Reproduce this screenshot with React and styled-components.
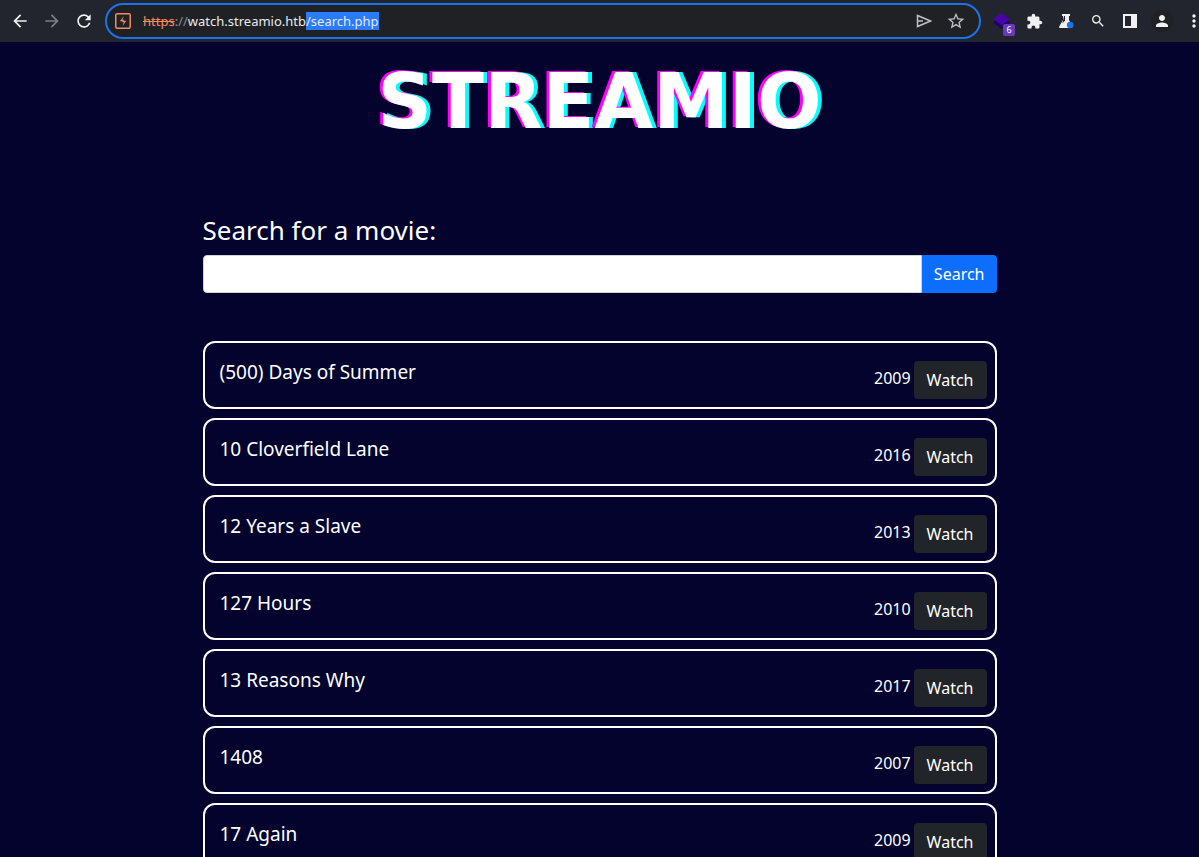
import React, { useState } from 'react';
import styled, { createGlobalStyle } from 'styled-components';
import {
  MdArrowBack,
  MdArrowForward,
  MdRefresh,
  MdStarBorder,
  MdExtension,
  MdSearch,
  MdPerson,
  MdMoreVert,
} from 'react-icons/md';

const GlobalStyle = createGlobalStyle`
  * {
    box-sizing: border-box;
  }

  body {
    margin: 0;
    background: #03032e;
    color: #fff;
    font-family: "Noto Sans", "Open Sans", sans-serif;
    font-size: 16px;
    line-height: 24px;
  }

  button, input {
    font: inherit;
  }
`;

const Screen = styled.div`
  height: 100vh;
  display: flex;
  flex-direction: column;
  overflow: hidden;
`;

const Toolbar = styled.header`
  display: flex;
  align-items: center;
  flex: none;
  height: 42px;
  padding-left: 4px;
  background: #22242e;
  overflow: hidden;
`;

const ToolButton = styled.button`
  display: flex;
  align-items: center;
  justify-content: center;
  flex: none;
  width: 32px;
  height: 32px;
  padding: 0;
  border: none;
  background: none;
  color: ${props => props.$color || '#f1f1f1'};
`;

const OverflowButton = styled(ToolButton)`
  margin-right: -11px;
`;

const Omnibox = styled.div`
  display: flex;
  align-items: center;
  flex: 1;
  min-width: 0;
  height: 36px;
  margin: 0 12px 0 5px;
  padding: 0 7px 0 8px;
  border: 2px solid #1a73e8;
  border-radius: 18px;
  background: #202124;
`;

const Url = styled.label`
  margin-left: 12px;
  color: #e8eaed;
  font-size: 13px;
  line-height: 18px;
  white-space: nowrap;
`;

const Scheme = styled.span`
  color: #f28b60;
  text-decoration: line-through;
`;

const Slashes = styled.span`
  color: #8b8e93;
`;

const Selected = styled.span`
  display: inline-block;
  background: #2b7bff;
`;

const UrlInput = styled.input`
  flex: 1;
  min-width: 0;
  border: none;
  outline: none;
  background: none;
  color: #e8eaed;
`;

const BadgeButton = styled(ToolButton)`
  position: relative;
  justify-content: flex-start;
  width: 25px;
`;

const Badge = styled.span`
  position: absolute;
  right: 3px;
  bottom: 1px;
  width: 12px;
  height: 12px;
  border-radius: 2px;
  background: #673ab7;
  color: #fff;
  font-size: 9px;
  line-height: 12px;
  text-align: center;
`;

const Avatar = styled.span`
  display: flex;
  align-items: center;
  justify-content: center;
  width: 22px;
  height: 22px;
  border-radius: 50%;
  background: #202124;
`;

const Page = styled.main`
  flex: 1;
  min-height: 0;
  overflow: hidden;
`;

const Logo = styled.h1`
  margin: 0;
  padding-top: 18px;
  color: #fff;
  font-family: "DejaVu Sans", sans-serif;
  font-size: 76px;
  font-weight: 700;
  line-height: 84px;
  text-align: center;
  text-shadow: -3px -1px 0 #f0f, 4px 0 0 #0ff;
`;

const Container = styled.div`
  width: 100%;
  max-width: 794px;
  margin: 0 auto;
`;

const SearchForm = styled.form`
  padding-top: 69px;
`;

const SearchLabel = styled.label`
  display: block;
  margin-bottom: 8px;
  font-size: 26px;
  line-height: 34px;
`;

const InputGroup = styled.div`
  display: flex;
  height: 38px;
`;

const SearchInput = styled.input`
  flex: 1;
  min-width: 0;
  padding: 6px 12px;
  border: 1px solid #ced4da;
  border-radius: 4px 0 0 4px;
  background: #fff;
  color: #212529;
  outline: none;
`;

const Button = styled.button`
  flex: none;
  height: 38px;
  padding: 0 ${props => (props.$primary ? '12px' : '13px')};
  border: none;
  border-radius: ${props => (props.$primary ? '0 4px 4px 0' : '4px')};
  background: ${props => (props.$primary ? '#0d6efd' : '#212529')};
  color: #fff;
  cursor: pointer;
`;

const MovieList = styled.ul`
  display: flex;
  flex-direction: column;
  gap: 9px;
  margin: 48px 0 0;
  padding: 0;
  list-style: none;
`;

const MovieCard = styled.li`
  display: flex;
  align-items: flex-start;
  padding: 18px 8px 8px 15px;
  border: 2px solid #fff;
  border-radius: 12px;
`;

const MovieTitle = styled.h2`
  flex: 1;
  margin: 0;
  font-size: 19px;
  font-weight: 400;
  line-height: 22px;
`;

const MovieYear = styled.span`
  margin: 5px 3px 0 0;
`;

const movies = [
  { title: '(500) Days of Summer', year: 2009 },
  { title: '10 Cloverfield Lane', year: 2016 },
  { title: '12 Years a Slave', year: 2013 },
  { title: '127 Hours', year: 2010 },
  { title: '13 Reasons Why', year: 2017 },
  { title: '1408', year: 2007 },
  { title: '17 Again', year: 2009 },
];

const BurpIcon = () => (
  <svg width="16" height="16" viewBox="0 0 16 16">
    <rect x="0.75" y="0.75" width="14.5" height="14.5" rx="1.5" fill="none" stroke="#f28b60" strokeWidth="1.5" />
    <path d="M8.8 3 4.8 8.2h2.6v1.4l1.4-1V6.9H7.4zM7.4 13l4-5.2H8.8V6.4l-1.4 1v1.7h1.4z" fill="#f28b60" />
  </svg>
);

const SendIcon = () => (
  <svg width="16" height="14" viewBox="0 0 16 14" fill="none" stroke="#bdc1c6" strokeWidth="1.5">
    <path d="M1.5 1.5 14.5 7l-13 5.5z" />
    <path d="M1.5 7H7" />
  </svg>
);

const LayersIcon = () => (
  <svg width="17" height="16" viewBox="0 0 17 16">
    <path d="M0 9.5 8.5 4l8.5 5.5L8.5 16z" fill="#20006b" />
    <path d="M0 6 8.5 0 17 6l-8.5 6z" fill="#4505a8" />
  </svg>
);

const FlaskIcon = () => (
  <svg width="16" height="16" viewBox="0 0 16 16">
    <path d="M4 1h8v2h-1v4l3.2 6.4q.6 1.6-1 1.6H2.2q-1.8 0-1-1.6L5 7V3H4z" fill="#f1f1f1" />
    <path d="M6 3h1v4.6l-2.6 3z" fill="#22242e" />
    <circle cx="12.2" cy="12" r="3.3" fill="#1a73e8" />
  </svg>
);

const PanelIcon = () => (
  <svg width="14" height="14" viewBox="0 0 14 14">
    <path d="M0 0h14v14H0zM2 2v10h6V2z" fill="#f1f1f1" fillRule="evenodd" />
  </svg>
);

const BrowserBar = () => (
  <Toolbar>
    <ToolButton aria-label="Back"><MdArrowBack size={20} /></ToolButton>
    <ToolButton aria-label="Forward" $color="#7d7e83"><MdArrowForward size={20} /></ToolButton>
    <ToolButton aria-label="Reload"><MdRefresh size={20} /></ToolButton>
    <Omnibox>
      <BurpIcon />
      <Url htmlFor="address">
        <Scheme>https</Scheme>
        <Slashes>://</Slashes>
        watch.streamio.htb
        <Selected>/search.php</Selected>
      </Url>
      <UrlInput id="address" type="text" />
      <ToolButton aria-label="Share"><SendIcon /></ToolButton>
      <ToolButton aria-label="Bookmark" $color="#bdc1c6"><MdStarBorder size={20} /></ToolButton>
    </Omnibox>
    <BadgeButton aria-label="Layers">
      <LayersIcon />
      <Badge>6</Badge>
    </BadgeButton>
    <ToolButton aria-label="Extensions"><MdExtension size={17} /></ToolButton>
    <ToolButton aria-label="Experiments"><FlaskIcon /></ToolButton>
    <ToolButton aria-label="Find"><MdSearch size={16} /></ToolButton>
    <ToolButton aria-label="Side panel"><PanelIcon /></ToolButton>
    <ToolButton aria-label="Profile">
      <Avatar><MdPerson size={18} /></Avatar>
    </ToolButton>
    <OverflowButton aria-label="Menu"><MdMoreVert size={20} /></OverflowButton>
  </Toolbar>
);

const Movie = ({ title, year }) => (
  <MovieCard>
    <MovieTitle>{title}</MovieTitle>
    <MovieYear>{year}</MovieYear>
    <Button type="button">Watch</Button>
  </MovieCard>
);

const App = () => {
  const [query, setQuery] = useState('');

  const handleSubmit = (event) => {
    event.preventDefault();
  };

  return (
    <>
      <GlobalStyle />
      <Screen>
        <BrowserBar />
        <Page>
          <Logo>STREAMIO</Logo>
          <Container>
            <SearchForm onSubmit={handleSubmit}>
              <SearchLabel htmlFor="query">Search for a movie:</SearchLabel>
              <InputGroup>
                <SearchInput
                  id="query"
                  type="text"
                  value={query}
                  onChange={(e) => setQuery(e.target.value)}
                />
                <Button type="submit" $primary>Search</Button>
              </InputGroup>
            </SearchForm>
            <MovieList>
              {movies.map((movie) => (
                <Movie key={movie.title} title={movie.title} year={movie.year} />
              ))}
            </MovieList>
          </Container>
        </Page>
      </Screen>
    </>
  );
};

export default App;
